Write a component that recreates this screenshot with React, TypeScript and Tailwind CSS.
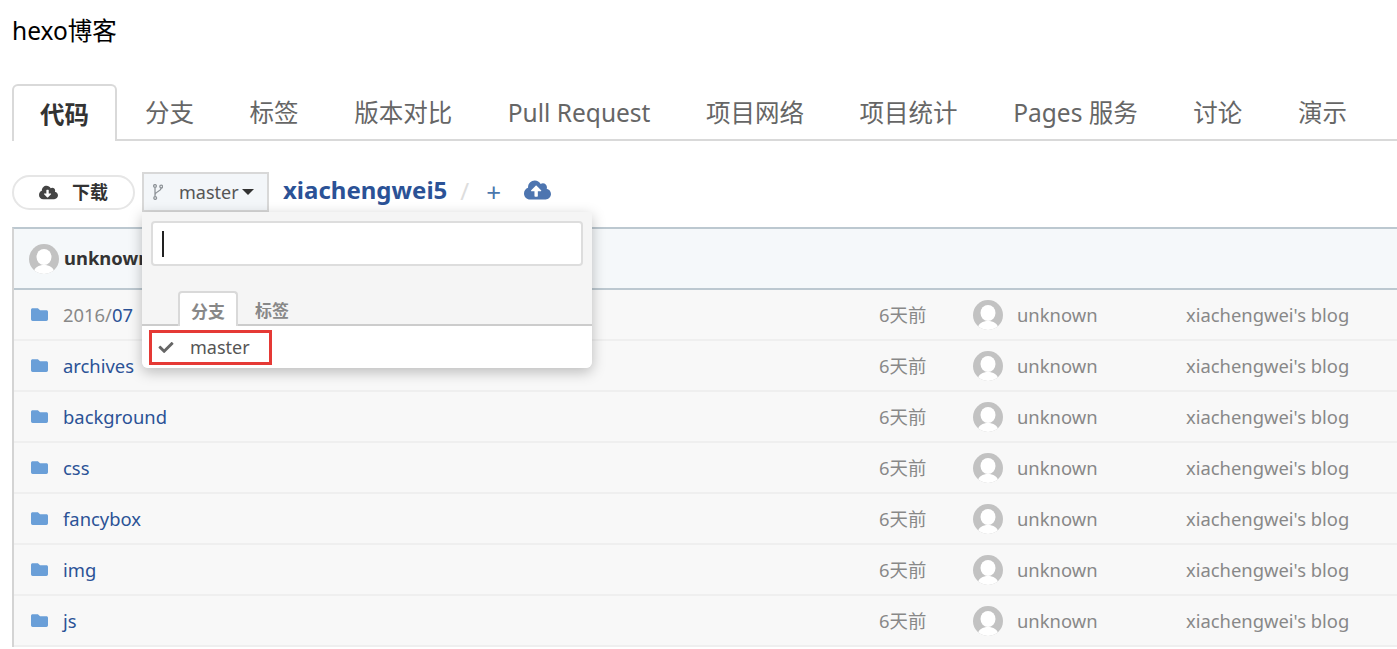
import React from 'react';
import { FaCheck, FaCloudDownloadAlt, FaCloudUploadAlt, FaFolder } from 'react-icons/fa';

const tabs = ['分支', '标签', '版本对比', 'Pull Request', '项目网络', '项目统计', 'Pages 服务', '讨论', '演示'];
const rows = ['2016/07', 'archives', 'background', 'css', 'fancybox', 'img', 'js'];

const Avatar = () => (
  <svg viewBox="0 0 30 30" className="h-[30px] w-[30px] shrink-0">
    <defs>
      <clipPath id="avatar-clip">
        <circle cx="15" cy="15" r="15" />
      </clipPath>
    </defs>
    <g clipPath="url(#avatar-clip)">
      <rect width="30" height="30" fill="#c2c2c2" />
      <ellipse cx="15" cy="13" rx="7.5" ry="8" fill="#fff" />
      <path d="M4 30c1-7 6-9 11-9s10 2 11 9z" fill="#fff" />
    </g>
  </svg>
);

const BranchIcon = () => (
  <svg viewBox="0 0 10 16" className="h-[16px] w-[10px]" fill="none" stroke="#8f9499" strokeWidth="1.3">
    <circle cx="2" cy="2" r="1.4" />
    <circle cx="8.2" cy="2.6" r="1.4" />
    <circle cx="2.2" cy="14" r="1.4" />
    <path d="M2 3.4v9.2M8.2 4c0 3.5-6 3.5-6 6.5" />
  </svg>
);

export default function App() {
  return (
    <div className="h-screen overflow-hidden bg-white font-['Noto_Sans','Noto_Sans_CJK_SC',sans-serif]">
      <h1 className="pl-3 pt-[13px] text-[24.5px] leading-[36px] text-black">hexo博客</h1>

      {/* Tabs */}
      <div className="ml-3 mt-[35px] flex h-[57px] border-b-2 border-[#d9d9d9] text-[24.5px]">
        <div className="-mb-[2px] flex h-[57px] w-[105px] shrink-0 items-center justify-center rounded-t-[6px] border-2 border-b-0 border-[#d9d9d9] bg-white pt-[3px] font-bold text-[#333]">
          代码
        </div>
        <div className="flex pl-[28px]">
          {tabs.map((tab) => (
            <div key={tab} className="mr-[55.6px] flex items-center whitespace-nowrap pt-[4px] text-[#666]">
              {tab}
            </div>
          ))}
        </div>
      </div>

      {/* Toolbar */}
      <div className="relative ml-3 mt-[31px] flex h-[40px] items-center">
        <button className="flex h-[35px] w-[123px] items-center justify-center gap-[14px] rounded-full border-2 border-[#e6e6e6] bg-white text-[18px] font-bold text-[#333]">
          <FaCloudDownloadAlt className="h-[19px] w-[19px] text-[#444]" />
          下载
        </button>
        <button className="ml-[7px] flex h-[40px] w-[127px] items-center rounded-none border-2 border-[#d8d8d8] bg-[#f3f6f9] pl-[9px] text-[18px] text-[#555]">
          <BranchIcon />
          <span className="ml-[16px]">master</span>
          <span className="ml-[3px] h-0 w-0 border-x-[6px] border-t-[6px] border-x-transparent border-t-[#333]" />
        </button>
        <span className="ml-[14px] pb-[4px] text-[24px] font-bold text-[#2b5296]">xiachengwei5</span>
        <span className="ml-[13px] pb-[2px] text-[24px] text-[#ddd]">/</span>
        <span className="ml-[17px] text-[26px] leading-none text-[#4a77ad]">+</span>
        <FaCloudUploadAlt className="mb-[4px] ml-[23px] h-[26px] w-[27px] text-[#4d75b0]" />

        {/* Branch dropdown */}
        <div className="absolute left-[130px] top-[40px] z-10 h-[156px] w-[450px] rounded-b-[6px] bg-[#f5f5f5] shadow-[0_4px_14px_rgba(0,0,0,0.25)]">
          <div className="mx-[9px] mt-[9px] flex h-[45px] items-center rounded-[4px] border-2 border-[#ddd] bg-white pl-[9px]">
            <span className="h-[26px] w-[2px] bg-[#222]" />
          </div>
          <div className="mt-[25px] flex h-[35px] border-b-2 border-[#ccc] pl-[36px] text-[17px] font-bold text-[#888]">
            <div className="-mb-[2px] flex h-[35px] w-[60px] items-center justify-center rounded-t-[4px] border-2 border-b-0 border-[#d9d9d9] bg-white pt-[4px]">
              分支
            </div>
            <div className="ml-[17px] flex items-center pt-[6px]">标签</div>
          </div>
          <div className="h-[42px] rounded-b-[6px] bg-white pl-[7px] pt-[4px]">
            <div className="flex h-[35px] w-[123px] items-center border-[3px] border-[#e53935] pl-[6px] text-[18px] text-[#555]">
              <FaCheck className="h-[15px] w-[16px] text-[#666]" />
              <span className="ml-[16px]">master</span>
            </div>
          </div>
        </div>
      </div>

      {/* File table */}
      <div className="ml-3 mr-[-10px] mt-[15px] border-l-2 border-t-2 border-[#bcc8d0] border-l-[#d4d4d4]">
        <div className="flex h-[61px] items-center border-b-2 border-[#bcc8d0] bg-[#f5f8fa] pl-[15px] text-[18.4px] font-bold text-[#333]">
          <Avatar />
          <span className="ml-[5px] pb-[2px]">unknown</span>
        </div>
        {rows.map((name) => (
          <div key={name} className="flex h-[51px] items-center border-b-2 border-[#efefef] bg-[#f8f8f8] pl-[16px] text-[18.4px] text-[#888]">
            <FaFolder className="h-[17px] w-[19px] shrink-0 text-[#6a9fd8]" />
            <span className="ml-[14px] w-[816px] shrink-0 text-[#2b5296]">
              {name === '2016/07' ? (
                <>
                  <span className="text-[#888]">2016/</span>07
                </>
              ) : (
                name
              )}
            </span>
            <span className="w-[94px] shrink-0">6天前</span>
            <Avatar />
            <span className="ml-[14px] w-[169px] shrink-0">unknown</span>
            <span className="whitespace-nowrap">xiachengwei's blog</span>
          </div>
        ))}
      </div>
    </div>
  );
}
